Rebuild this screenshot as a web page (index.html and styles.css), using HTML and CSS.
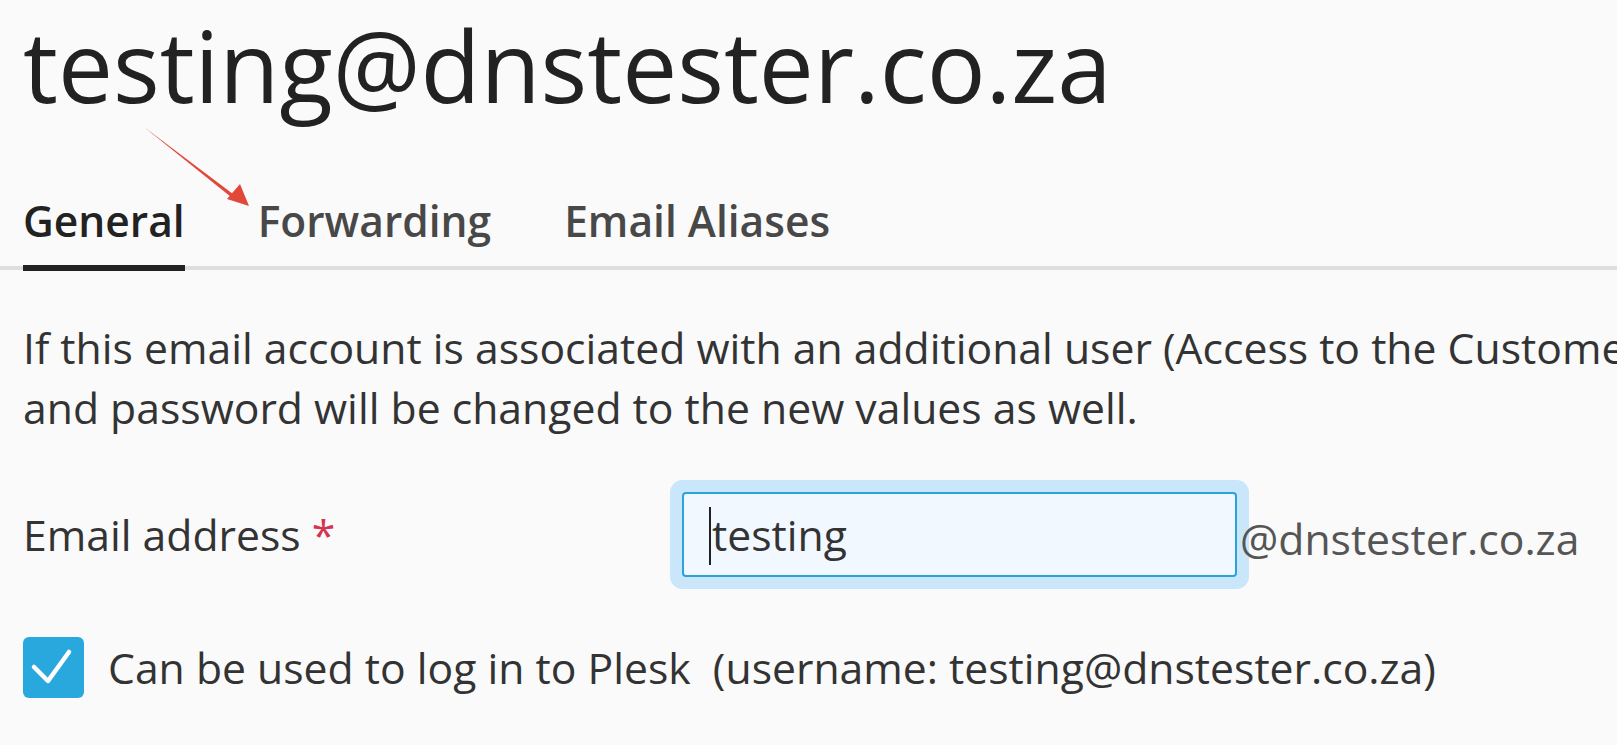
FILE: index.html
```html
<!DOCTYPE html>
<html lang="en">
<head>
<meta charset="utf-8">
<title>testing@dnstester.co.za</title>
<link rel="stylesheet" href="styles.css">
</head>
<body>
<div class="page">
  <h1 class="title">testing@dnstester.co.za</h1>
  <nav class="tabs">
    <a class="tab tab-active">General</a>
    <a class="tab">Forwarding</a>
    <a class="tab">Email Aliases</a>
  </nav>
  <p class="hint">If this email account is associated with an additional user (Access to the Customer Panel), the user name<br>and password will be changed to the new values as well.</p>
  <div class="form-row">
    <label class="field-label">Email address <span class="required">*</span></label>
    <div class="field">
      <div class="text-input" role="textbox"><span class="caret"></span>testing</div>
      <span class="suffix">@dnstester.co.za</span>
    </div>
  </div>
  <div class="check-row">
    <span class="checkbox">
      <svg width="61" height="61" viewBox="0 0 61 61"><path d="M11 30 L25 44 L46 15" fill="none" stroke="#fff" stroke-width="4.5" stroke-linecap="round" stroke-linejoin="round"/></svg>
    </span>
    <span class="check-label">Can be used to log in to Plesk &nbsp;(username: testing@dnstester.co.za)</span>
  </div>
</div>
<svg class="arrow" width="300" height="260" viewBox="0 0 300 260">
  <path d="M144 127 L233 194 L231 197 Z" fill="#e2483a"/>
  <path d="M249 206 L227 199 L240 184 Z" fill="#e2483a"/>
</svg>
</body>
</html>
```
FILE: styles.css
```css
html, body {
  margin: 0;
  padding: 0;
}
body {
  background: #fafafa;
  font-family: "Open Sans", "Liberation Sans", sans-serif;
  color: #333;
  overflow: hidden;
  width: 1617px;
  height: 745px;
  position: relative;
}
.page {
  padding: 8px 0 0 23px;
}
.title {
  margin: 0 0 68px;
  font-size: 98px;
  font-weight: 400;
  line-height: 115px;
  color: #222;
  white-space: nowrap;
}
.tabs {
  display: flex;
  gap: 73px;
  border-bottom: 4px solid #dedede;
  margin-left: -23px;
  padding-left: 23px;
}
.tab {
  font-size: 42.5px;
  font-weight: 600;
  line-height: 60px;
  color: #484848;
  padding-bottom: 14px;
  border-bottom: 6px solid transparent;
  margin-bottom: -5px;
}
.tab-active {
  color: #222;
  border-bottom-color: #222;
}
.hint {
  margin: 48px 0 0;
  font-size: 42.7px;
  line-height: 60px;
  white-space: nowrap;
  color: #333;
}
.form-row {
  display: flex;
  align-items: center;
  margin-top: 54px;
}
.field-label {
  width: 659px;
  flex: none;
  font-size: 42.7px;
  line-height: 60px;
  color: #333;
}
.required {
  color: #d3344f;
}
.field {
  display: flex;
  align-items: center;
}
.text-input {
  width: 523px;
  height: 81px;
  box-sizing: content-box;
  border: 2px solid #2aa3d9;
  border-radius: 4px;
  background: #f1f8ff;
  box-shadow: 0 0 0 12px #c9e6fb;
  padding-left: 28px;
  font-size: 42.7px;
  line-height: 81px;
  color: #333;
  position: relative;
}
.caret {
  position: absolute;
  left: 25px;
  top: 13px;
  width: 2px;
  height: 58px;
  background: #222;
}
.suffix {
  margin-left: 3px;
  font-size: 42.7px;
  line-height: 60px;
  color: #555;
  position: relative;
  top: 4px;
}
.check-row {
  display: flex;
  align-items: center;
  gap: 24px;
  margin-top: 60px;
}
.checkbox {
  width: 61px;
  height: 61px;
  border-radius: 6px;
  background: #29a8dd;
  display: block;
  flex: none;
}
.checkbox svg {
  display: block;
}
.check-label {
  font-size: 42.7px;
  line-height: 60px;
  color: #333;
  white-space: nowrap;
}
.arrow {
  position: absolute;
  left: 0;
  top: 0;
}
```
